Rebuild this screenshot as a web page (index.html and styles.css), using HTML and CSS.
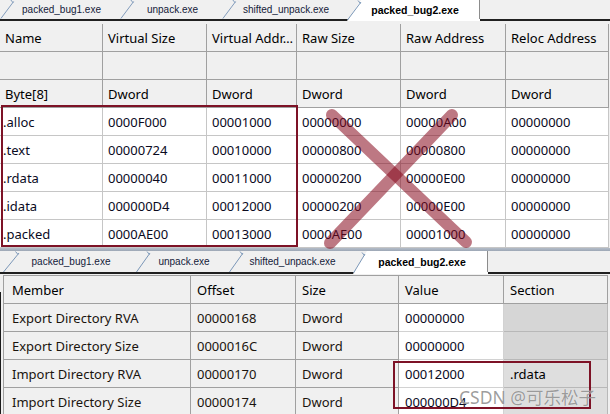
FILE: index.html
```html
<!DOCTYPE html>
<html>
<head>
<meta charset="utf-8">
<title>PE sections</title>
<link rel="stylesheet" href="styles.css">
</head>
<body>
<div class="screen">
  <section class="panel panel-top">
    <div class="tabs tabs-top">
      <div class="tab w120"><svg class="sep" viewBox="0 0 16 20"><path d="M0.5 19.5 L14 1.5 M11 0 L13.5 3"/></svg><span>packed_bug1.exe</span></div>
      <div class="tab w102"><svg class="sep" viewBox="0 0 16 20"><path d="M0.5 19.5 L14 1.5 M11 0 L13.5 3"/></svg><span>unpack.exe</span></div>
      <div class="tab w125"><svg class="sep" viewBox="0 0 16 20"><path d="M0.5 19.5 L14 1.5 M11 0 L13.5 3"/></svg><span>shifted_unpack.exe</span></div>
      <div class="tab w133 active"><svg class="sep" viewBox="0 0 16 20"><path d="M0.5 19.5 L14 1.5 M11 0 L13.5 3"/></svg><span>packed_bug2.exe</span></div>
    </div>
    <div class="grid grid-top">
      <div class="c h">Name</div><div class="c h">Virtual Size</div><div class="c h">Virtual Addr…</div><div class="c h">Raw Size</div><div class="c h">Raw Address</div><div class="c h">Reloc Address</div>
      <div class="c h"></div><div class="c h"></div><div class="c h"></div><div class="c h"></div><div class="c h"></div><div class="c h"></div>
      <div class="c h">Byte[8]</div><div class="c h">Dword</div><div class="c h">Dword</div><div class="c h">Dword</div><div class="c h">Dword</div><div class="c h">Dword</div>
      <div class="c d n">.alloc</div><div class="c d">0000F000</div><div class="c d">00001000</div><div class="c d">00000000</div><div class="c d">00000A00</div><div class="c d">00000000</div>
      <div class="c d n">.text</div><div class="c d">00000724</div><div class="c d">00010000</div><div class="c d">00000800</div><div class="c d">00000800</div><div class="c d">00000000</div>
      <div class="c d n">.rdata</div><div class="c d">00000040</div><div class="c d">00011000</div><div class="c d">00000200</div><div class="c d">00000E00</div><div class="c d">00000000</div>
      <div class="c d n">.idata</div><div class="c d">000000D4</div><div class="c d">00012000</div><div class="c d">00000200</div><div class="c d">00000E00</div><div class="c d">00000000</div>
      <div class="c d n">.packed</div><div class="c d">0000AE00</div><div class="c d">00013000</div><div class="c d">0000AE00</div><div class="c d">00001000</div><div class="c d">00000000</div>
    </div>
  </section>

  <div class="splitter"></div>

  <section class="panel panel-bottom">
    <div class="tabs tabs-bottom">
      <div class="tab w133"><svg class="sep" viewBox="0 0 16 20"><path d="M0.5 20.5 L16 1.5 M12.5 0 L15 3"/></svg><span>packed_bug1.exe</span></div>
      <div class="tab w93"><svg class="sep" viewBox="0 0 16 20"><path d="M0.5 20.5 L14 1.5 M11 0 L13.5 3"/></svg><span>unpack.exe</span></div>
      <div class="tab w124"><svg class="sep" viewBox="0 0 16 20"><path d="M0.5 20.5 L14 1.5 M11 0 L13.5 3"/></svg><span>shifted_unpack.exe</span></div>
      <div class="tab w135 active"><svg class="sep" viewBox="0 0 16 20"><path d="M0.5 20.5 L12 1.5 M9 0 L11.5 3"/></svg><span>packed_bug2.exe</span></div>
    </div>
    <div class="body-row">
      <div class="gutter"></div>
      <div class="grid grid-bottom">
        <div class="c h">Member</div><div class="c h">Offset</div><div class="c h">Size</div><div class="c h">Value</div><div class="c h">Section</div>
        <div class="c g">Export Directory RVA</div><div class="c g">00000168</div><div class="c g">Dword</div><div class="c v">00000000</div><div class="c s"></div>
        <div class="c g">Export Directory Size</div><div class="c g">0000016C</div><div class="c g">Dword</div><div class="c v">00000000</div><div class="c s"></div>
        <div class="c g">Import Directory RVA</div><div class="c g">00000170</div><div class="c g">Dword</div><div class="c v">00012000</div><div class="c s lt">.rdata</div>
        <div class="c g">Import Directory Size</div><div class="c g">00000174</div><div class="c g">Dword</div><div class="c v">000000D4</div><div class="c s lt"></div>
      </div>
    </div>
  </section>

  <svg class="xmark" viewBox="0 0 610 414">
    <line x1="332" y1="115" x2="466" y2="242"/>
    <line x1="452" y1="115" x2="330" y2="243"/>
  </svg>
  <div class="hl hl-top"></div>
  <div class="hl hl-bottom"></div>
  <div class="wm">CSDN @可乐松子</div>
</div>
</body>
</html>
```

FILE: styles.css
```css
html, body {
  margin: 0;
  padding: 0;
}
body {
  background: #f0f0f0;
  width: 610px;
  height: 414px;
  overflow: hidden;
  font-family: "Noto Sans", "Open Sans", sans-serif;
  font-size: 13px;
  color: #000;
}
.screen {
  position: relative;
  width: 610px;
  height: 414px;
  display: flex;
  flex-direction: column;
}

/* ---------- tab strips ---------- */
.tabs {
  display: flex;
  border-bottom: 2px solid #202020;
  flex: none;
}
.tabs-top {
  height: 19px;
}
.tabs-bottom {
  height: 21px;
  padding-left: 3px;
}
.tab {
  position: relative;
  z-index: 0;
  display: flex;
  align-items: center;
  justify-content: center;
  height: 100%;
  font-family: "Liberation Sans", Arial, sans-serif;
  font-size: 10px;
  color: #14213a;
  flex: none;
}
.tab span {
  padding-left: 3px;
}
.tab .sep {
  position: absolute;
  left: 0;
  top: 0;
  width: 16px;
  height: 100%;
  overflow: visible;
}
.tab .sep path {
  fill: none;
  stroke: #7b97b8;
  stroke-width: 1;
}
.tab.active {
  font-size: 10.5px;
  font-weight: bold;
  color: #000;
  height: calc(100% + 2px);
  margin-bottom: -2px;
  padding-bottom: 2px;
  box-sizing: border-box;
}
.tab.active::before {
  content: "";
  position: absolute;
  inset: 0;
  z-index: -1;
  background: #fff;
  clip-path: polygon(0 100%, 14px 0, 100% 0, 100% 100%);
}
.tab.active::after {
  content: "";
  position: absolute;
  right: 0;
  top: 0;
  bottom: 2px;
  width: 1px;
  background: #8c8c8c;
}
.w93 { width: 93px; }
.w102 { width: 102px; }
.w120 { width: 120px; }
.w124 { width: 124px; }
.w125 { width: 125px; }
.w133 { width: 133px; }
.w135 { width: 135px; }

/* ---------- grids ---------- */
.grid {
  display: grid;
  flex: none;
}
.c {
  box-sizing: border-box;
  height: 28px;
  display: flex;
  align-items: center;
  white-space: nowrap;
  overflow: hidden;
  border-right: 1px solid #a0a0a0;
  border-bottom: 1px solid #a0a0a0;
}
.grid-top {
  margin-top: 3px;
  grid-template-columns: 103px 104px 90px 104px 105px 103px;
}
.grid-top .c {
  padding-left: 5px;
}
.grid-top .c.n {
  padding-left: 3px;
}
.h {
  background: #f0f0f0;
}
.d {
  background: #fff;
  border-color: #c6c6c6;
  color: #0a0a1e;
}

.splitter {
  height: 3px;
  flex: none;
  background: linear-gradient(#b3bcc8, #9da7b5);
}

.panel-bottom {
  display: flex;
  flex-direction: column;
}
.body-row {
  display: flex;
  margin-top: 1px;
}
.gutter {
  width: 3px;
  flex: none;
  background: linear-gradient(to bottom, transparent 17px, #1a1a1a 17px) left top / 1px 100% no-repeat;
}
.grid-bottom {
  grid-template-columns: 187px 105px 103px 105px 104px;
  border-left: 1px solid #a0a0a0;
  border-top: 1px solid #a0a0a0;
}
.grid-bottom .c {
  padding-left: 6px;
}
.grid-bottom .c:nth-child(5n+1) {
  padding-left: 8px;
}
.g {
  background: #f0f0f0;
  color: #1a140e;
}
.v {
  background: #fff;
  border-color: #d2d2d2;
  color: #0a0a1e;
}
.s {
  background: #d6d6d6;
  border-color: #b8b8b8;
  color: #000;
}
.s.lt {
  background: #dedede;
}

/* ---------- overlays ---------- */
.xmark {
  position: absolute;
  left: 0;
  top: 0;
  width: 610px;
  height: 414px;
  pointer-events: none;
}
.xmark line {
  stroke: #860a1e;
  stroke-opacity: 0.55;
  stroke-width: 12;
  stroke-linecap: round;
}
.hl {
  position: absolute;
  box-sizing: border-box;
  border: 2px solid #7d1226;
}
.hl-top {
  left: 1px;
  top: 105px;
  width: 297px;
  height: 142px;
}
.hl-bottom {
  left: 393px;
  top: 361px;
  width: 198px;
  height: 48px;
}
.wm {
  position: absolute;
  left: 459px;
  top: 385px;
  font-family: "Noto Sans", "Noto Sans CJK SC", sans-serif;
  font-size: 17.5px;
  line-height: 24px;
  color: rgba(120, 120, 120, 0.72);
  text-shadow: 0 0 1px rgba(255, 255, 255, 0.8);
  white-space: nowrap;
}
```
